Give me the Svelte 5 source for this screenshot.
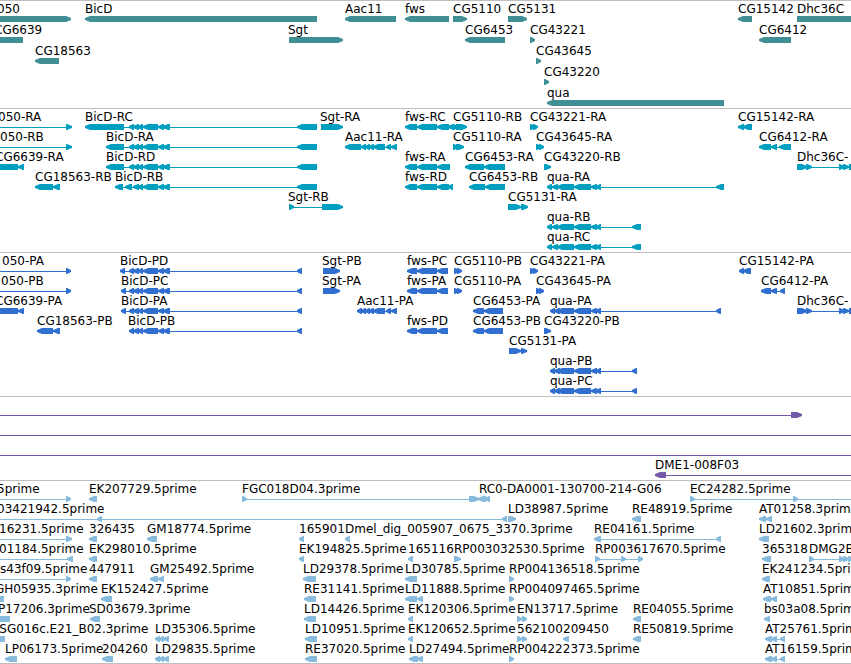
<script lang="ts">
  type Block = [number, number];

  interface Feature {
    name: string;
    strand: number;
    x: number; // where the label starts
    blocks: Block[];
  }

  interface Track {
    id: string;
    title: string;
    rows: Feature[][];
  }

  const f = (name: string, strand: number, x: number, ...blocks: Block[]): Feature => ({
    name,
    strand,
    x,
    blocks
  });

  // Features that carry on past either side of the visible region
  const LEFT: Block = [-60, -50];
  const RIGHT: Block = [3990, 4000];

  // Exons shared between isoforms
  const bicd: Block[] = [[129, 134], [133, 139], [138, 143], [143, 158], [158, 164], [163, 170]];
  const bicdR: Block[] = [...bicd, [297, 317]];
  const bicdP: Block[] = [...bicd, [297, 302]];
  const quaTail: Block[] = [[557, 574], [574, 591], [591, 597], [596, 601]];
  const quaR: Block[] = [[547, 552], [552, 558], ...quaTail];
  const quaP: Block[] = [[550, 555], [554, 560], ...quaTail];
  const aac: Block[] = [[361, 366], [365, 370], [369, 374], [373, 385], [386, 391], [391, 397]];
  const dhc: Block[] = [[797, 807], [806, 812], [839, 844], [843, 849], [849, 860], RIGHT];
  const fwsP: Block[] = [[407, 417], [417, 437], [437, 448]];
  const ld: Block[] = [[155, 160], [159, 164], [163, 169]];
  const at: Block[] = [[765, 772], [771, 777], [780, 785]];

  const tracks: Track[] = [
    {
      id: 'gene',
      title: 'Genes',
      rows: [
        [
          f('050', 1, -3, [-60, 71]),
          f('BicD', -1, 85, [85, 317]),
          f('Aac11', -1, 345, [345, 396]),
          f('fws', -1, 405, [405, 449]),
          f('CG5110', 1, 453, [453, 467]),
          f('CG5131', 1, 508, [508, 527]),
          f('CG15142', -1, 738, [738, 752]),
          f('Dhc36C', 1, 797, [797, 4000])
        ],
        [
          f('CG6639', -1, -6, [-60, 23]),
          f('Sgt', 1, 288, [289, 343]),
          f('CG6453', -1, 465, [465, 505]),
          f('CG43221', 1, 530, [530, 535]),
          f('CG6412', -1, 759, [759, 791])
        ],
        [f('CG18563', -1, 35, [35, 59]), f('CG43645', 1, 536, [536, 541])],
        [f('CG43220', 1, 544, [544, 549])],
        [f('qua', -1, 547, [547, 724])]
      ]
    },
    {
      id: 'transcript',
      title: 'Transcripts',
      rows: [
        [
          f('050-RA', 1, -2, LEFT, [66, 72]),
          f('BicD-RC', -1, 85, [85, 124], ...bicdR),
          f('Sgt-RA', 1, 320, [321, 343]),
          f('fws-RC', -1, 405, [405, 417], [417, 437], [437, 449], [448, 454]),
          f('CG5110-RB', 1, 453, [453, 458], [456, 467]),
          f('CG43221-RA', 1, 530, [530, 535], [533, 538]),
          f('CG15142-RA', -1, 738, [738, 744], [743, 752])
        ],
        [
          f('050-RB', 1, 0, LEFT, [66, 72]),
          f('BicD-RA', -1, 106, [106, 124], ...bicdR),
          f('Aac11-RA', -1, 345, [345, 361], ...aac),
          f('CG5110-RA', 1, 453, [453, 458], [456, 464]),
          f('CG43645-RA', 1, 536, [536, 541], [539, 544]),
          f('CG6412-RA', -1, 759, [759, 771], [771, 777], [779, 791])
        ],
        [
          f('CG6639-RA', -1, -5, [-60, 18], [18, 24]),
          f('BicD-RD', -1, 106, [106, 124], ...bicdR),
          f('fws-RA', -1, 405, [405, 417], [417, 437], [437, 450]),
          f('CG6453-RA', -1, 465, [465, 484], [484, 505]),
          f('CG43220-RB', 1, 544, [544, 551]),
          f('Dhc36C-', 1, 797, ...dhc)
        ],
        [
          f('CG18563-RB', -1, 35, [35, 53], [53, 60]),
          f('BicD-RB', -1, 115, [115, 123], [125, 132], ...bicdR.slice(1)),
          f('fws-RD', -1, 405, [405, 417], [417, 437], [437, 449], [448, 453]),
          f('CG6453-RB', -1, 469, [469, 485], [485, 505]),
          f('qua-RA', -1, 547, ...quaR, [716, 724])
        ],
        [
          f('Sgt-RB', 1, 288, [289, 294], [322, 343]),
          f('CG5131-RA', 1, 508, [508, 521], [521, 528])
        ],
        [f('qua-RB', -1, 547, ...quaR, [632, 641])],
        [f('qua-RC', -1, 547, ...quaR, [632, 641])]
      ]
    },
    {
      id: 'protein',
      title: 'Proteins',
      rows: [
        [
          f('050-PA', 1, 2, LEFT, [66, 71]),
          f('BicD-PD', -1, 120, [120, 125], ...bicdP),
          f('Sgt-PB', 1, 322, [323, 340]),
          f('fws-PC', -1, 407, ...fwsP),
          f('CG5110-PB', 1, 454, [454, 459], [457, 462]),
          f('CG43221-PA', 1, 530, [530, 535], [533, 538]),
          f('CG15142-PA', -1, 739, [739, 744], [743, 751])
        ],
        [
          f('050-PB', 1, 1, LEFT, [66, 71]),
          f('BicD-PC', -1, 121, [121, 126], ...bicdP),
          f('Sgt-PA', 1, 322, [323, 340]),
          f('fws-PA', -1, 407, ...fwsP),
          f('CG5110-PA', 1, 454, [454, 459], [457, 462]),
          f('CG43645-PA', 1, 536, [536, 541], [539, 544]),
          f('CG6412-PA', -1, 761, [761, 771], [771, 777], [780, 785])
        ],
        [
          f('CG6639-PA', -1, -5, [-60, 18], [18, 24]),
          f('BicD-PA', -1, 121, [121, 126], ...bicdP),
          f('Aac11-PA', -1, 357, [357, 362], ...aac),
          f('CG6453-PA', -1, 473, [473, 484], [484, 503]),
          f('qua-PA', -1, 550, ...quaP, [716, 721]),
          f('Dhc36C-', 1, 797, ...dhc)
        ],
        [
          f('CG18563-PB', -1, 37, [37, 53], [53, 60]),
          f('BicD-PB', -1, 128, ...bicdP),
          f('fws-PD', -1, 407, ...fwsP),
          f('CG6453-PB', -1, 473, [473, 484], [484, 503]),
          f('CG43220-PB', 1, 544, [544, 551])
        ],
        [f('CG5131-PA', 1, 509, [509, 521], [521, 527])],
        [f('qua-PB', -1, 550, ...quaP, [632, 637])],
        [f('qua-PC', -1, 550, ...quaP, [632, 637])]
      ]
    },
    {
      id: 'mrna',
      title: 'mRNA',
      rows: [
        [f('', 1, 0, LEFT, [791, 802])],
        [f('', 1, 0, LEFT, RIGHT)],
        [f('', 1, 0, LEFT, RIGHT)],
        [f('DME1-008F03', -1, 655, [655, 666], RIGHT)]
      ]
    },
    {
      id: 'est',
      title: 'ESTs',
      rows: [
        [
          f('5prime', 1, -3, LEFT, [66, 71]),
          f('EK207729.5prime', -1, 89, [89, 97]),
          f('FGC018D04.3prime', 1, 242, [242, 247], [469, 479]),
          f('RC0-DA0001-130700-214-G06', -1, 479, [478, 486], [484, 490]),
          f('EC24282.5prime', 1, 690, [690, 695], [793, 798], RIGHT)
        ],
        [
          f('03421942.5prime', -1, -3, LEFT, [97, 102], [502, 507]),
          f('LD38987.5prime', 1, 508, [508, 516]),
          f('RE48919.5prime', -1, 632, [632, 641]),
          f('AT01258.3prime', -1, 759, [759, 766], [766, 772])
        ],
        [
          f('16231.5prime', 1, -1, LEFT, [66, 72]),
          f('326435', -1, 89, [89, 97]),
          f('GM18774.5prime', -1, 147, [147, 157]),
          f('165901', -1, 299, [299, 304]),
          f('Dmel_dig_005907_0675_3370.3prime', -1, 345, [345, 350]),
          f('RE04161.5prime', -1, 594, [594, 601], [716, 721]),
          f('LD21602.3prime', -1, 759, [759, 769])
        ],
        [
          f('01184.5prime', -1, -1, LEFT, [67, 73]),
          f('EK298010.5prime', -1, 89, [89, 97]),
          f('EK194825.5prime', -1, 299, [299, 304]),
          f('165116', -1, 408, [408, 413]),
          f('RP003032530.5prime', 1, 454, [454, 461]),
          f('RP003617670.5prime', 1, 595, [595, 600], [621, 626], [638, 643]),
          f('365318', -1, 762, [762, 771]),
          f('DMG2B', 1, 809, [809, 814], [839, 844], [843, 849], [848, 853], RIGHT)
        ],
        [
          f('s43f09.5prime', 1, 0, LEFT, [66, 71]),
          f('447911', -1, 89, [89, 97]),
          f('GM25492.5prime', -1, 150, [150, 158], [158, 164]),
          f('LD29378.5prime', -1, 303, [303, 316]),
          f('LD30785.5prime', -1, 405, [405, 417]),
          f('RP004136518.5prime', 1, 509, [509, 514]),
          f('EK241234.5prime', -1, 762, [762, 770])
        ],
        [
          f('GH05935.3prime', -1, -5, [-60, 4]),
          f('EK152427.5prime', -1, 101, [101, 112]),
          f('RE31141.5prime', -1, 304, [304, 316]),
          f('LD11888.5prime', -1, 405, [405, 417], [417, 423]),
          f('RP004097465.5prime', 1, 509, [509, 514]),
          f('AT10851.5prime', -1, 763, [763, 771], [771, 777])
        ],
        [
          f('P17206.3prime', -1, -2, [-60, 10]),
          f('SD03679.3prime', -1, 89, [90, 100]),
          f('LD14426.5prime', -1, 304, [304, 316]),
          f('EK120306.5prime', -1, 408, [408, 413]),
          f('EN13717.5prime', 1, 517, [517, 522], [522, 527]),
          f('RE04055.5prime', -1, 633, [633, 641]),
          f('bs03a08.5prime', -1, 764, [764, 770])
        ],
        [
          f('TSG016c.E21_B02.3prime', -1, -8, [-60, 5]),
          f('LD35306.5prime', -1, 155, ...ld),
          f('LD10951.5prime', -1, 305, [305, 317]),
          f('EK120652.5prime', -1, 408, [408, 413]),
          f('562100', 1, 517, [517, 522], [522, 527]),
          f('209450', -1, 563, [563, 569]),
          f('RE50819.5prime', -1, 633, [633, 641]),
          f('AT25761.5prime', -1, 765, ...at)
        ],
        [
          f('LP06173.5prime', -1, 5, [5, 17]),
          f('204260', -1, 102, [102, 113]),
          f('LD29835.5prime', -1, 155, ...ld),
          f('RE37020.5prime', -1, 305, [305, 317]),
          f('LD27494.5prime', -1, 409, [409, 418], [417, 423]),
          f('RP004222373.5prime', 1, 509, [509, 514]),
          f('AT16159.5prime', -1, 765, ...at)
        ]
      ]
    }
  ];

  // A block is a bar with a slightly blunt point on its strand's side
  function arrow([a, b]: Block, strand: number) {
    const tip = Math.min(5, b - a - 1);
    return strand < 0
      ? `M${a} 17L${a + tip} 15H${b}V21H${a + tip}L${a} 19Z`
      : `M${b} 17L${b - tip} 15H${a}V21H${b - tip}L${b} 19Z`;
  }

  const start = (feature: Feature) => feature.blocks[0][0];
  const end = (feature: Feature) => feature.blocks[feature.blocks.length - 1][1];
</script>

<main class="browser">
  {#each tracks as track (track.id)}
    <section class="track {track.id}" aria-label={track.title}>
      {#each track.rows as row}
        <svg class="row">
          {#each row as feature}
            {#if feature.blocks.length > 1}
              <rect x={start(feature)} y="18" width={end(feature) - start(feature)} height="1" />
            {/if}
            {#each feature.blocks as block}
              <path d={arrow(block, feature.strand)} />
            {/each}
            {#if feature.name}
              <text x={feature.x} y="12">{feature.name}</text>
            {/if}
          {/each}
        </svg>
      {/each}
    </section>
  {/each}
</main>

<style>
  :global(body) {
    margin: 0;
    background: #fff;
  }

  .browser {
    overflow: hidden;
    font-family: 'DejaVu Sans', sans-serif;
    font-size: 12px;
  }

  .track {
    display: flex;
    flex-direction: column;
    padding-bottom: 3px;
    border-top: 1px solid #bebebe;
  }

  .track:last-child {
    padding-bottom: 2px;
    border-bottom: 1px solid #bebebe;
  }

  .row {
    display: block;
    width: 100%;
    height: 20px;
    overflow: visible;
  }

  .row text {
    fill: #000;
  }

  .gene {
    gap: 1px;
    fill: #408f94;
  }

  .transcript {
    fill: #009fbf;
  }

  .protein {
    fill: #306fcf;
  }

  .mrna {
    fill: #7359a8;
  }

  .est {
    fill: #87bbdd;
  }
</style>
